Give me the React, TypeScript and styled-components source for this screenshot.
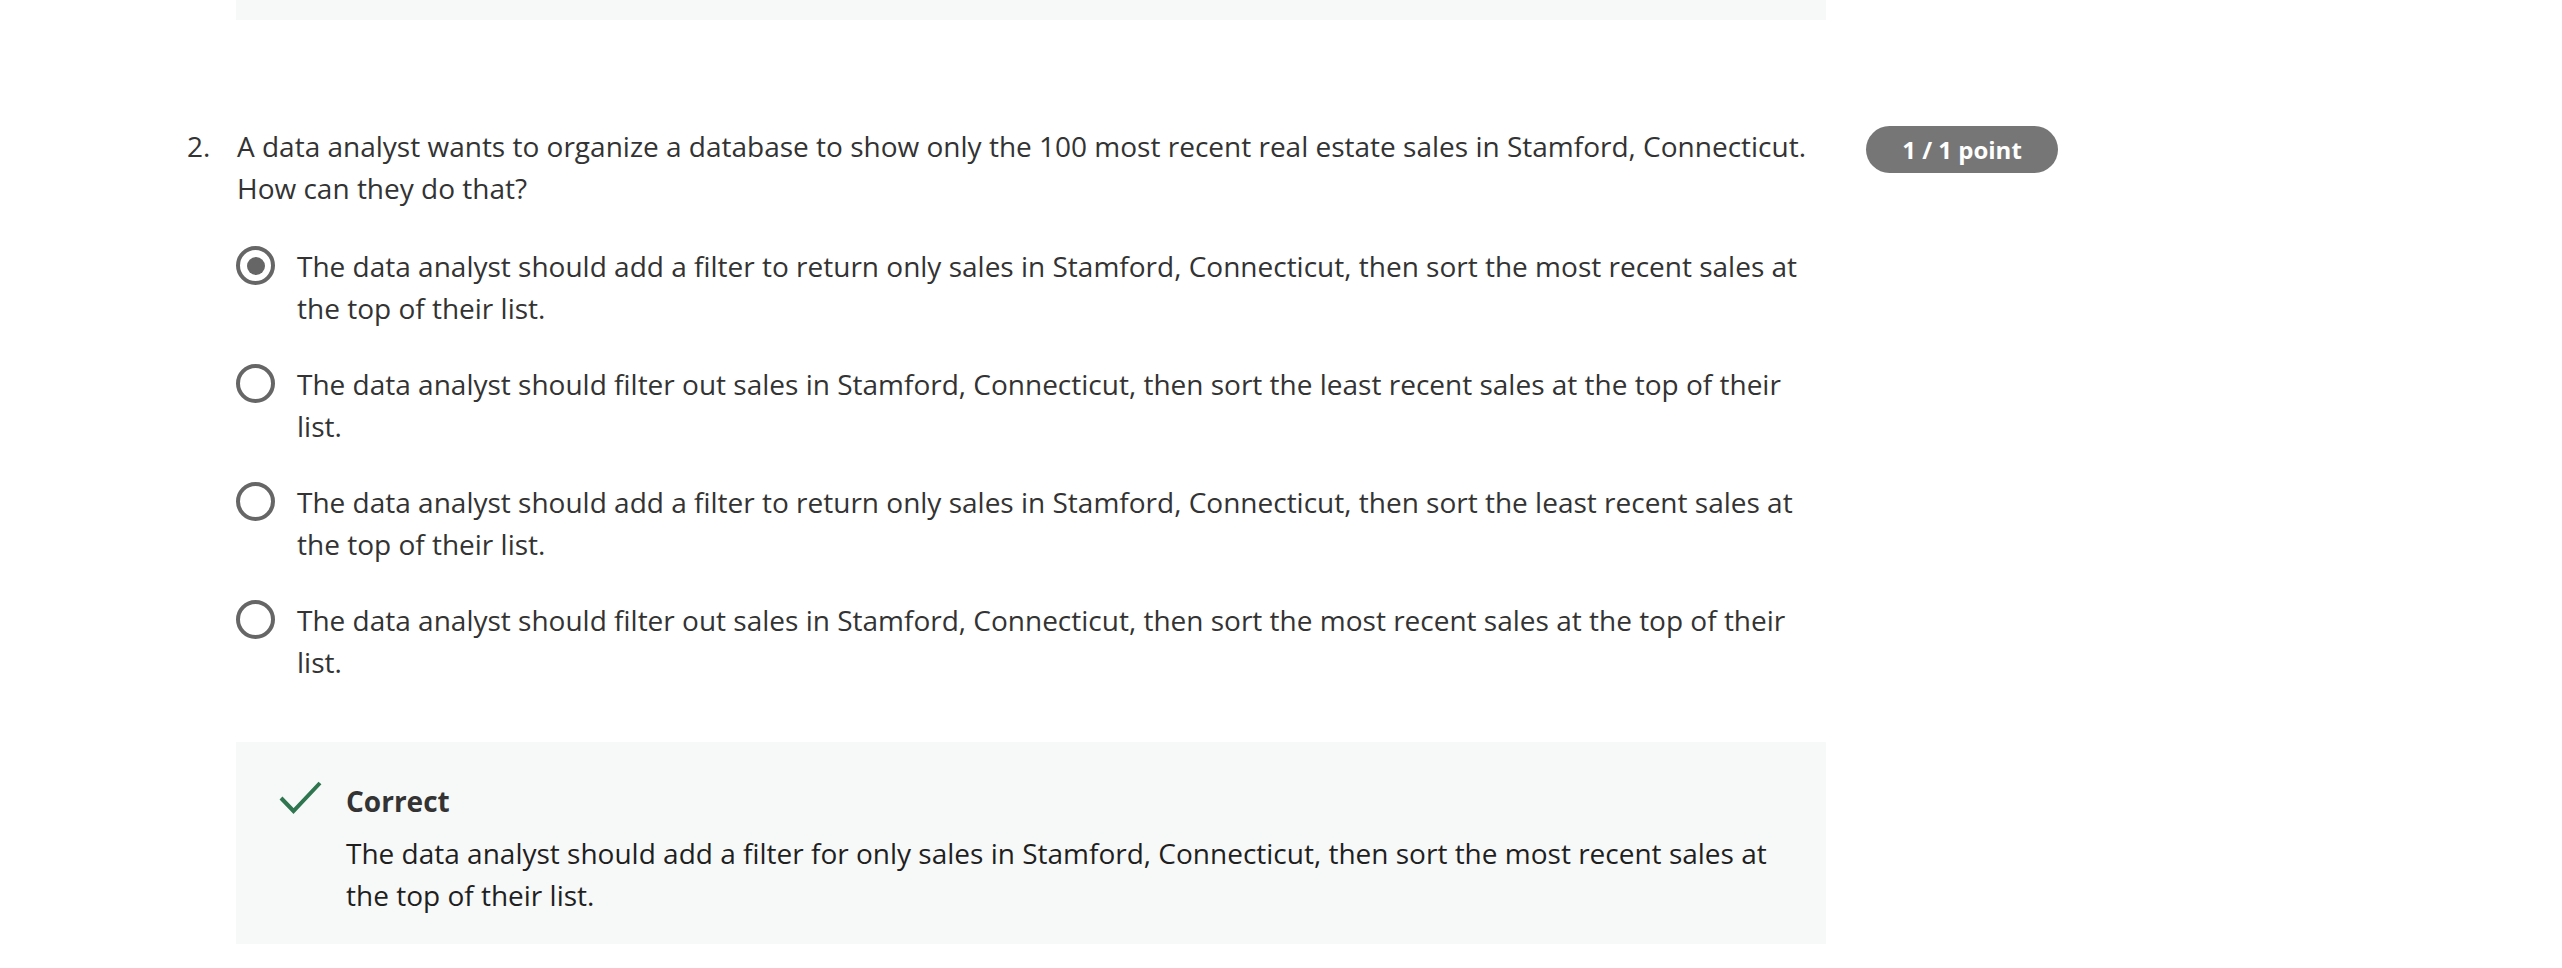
import React from 'react'
import styled, { createGlobalStyle } from 'styled-components'

const GlobalStyle = createGlobalStyle`
    html, body {
        margin: 0;
        padding: 0;
        background: #ffffff;
    }

    body {
        font-family: "Open Sans", "Noto Sans", sans-serif;
        color: #333333;
    }
`

interface OptionItem {
    text: string
    selected?: boolean
}

const options: OptionItem[] = [
    {
        text: 'The data analyst should add a filter to return only sales in Stamford, Connecticut, then sort the most recent sales at the top of their list.',
        selected: true,
    },
    { text: 'The data analyst should filter out sales in Stamford, Connecticut, then sort the least recent sales at the top of their list.' },
    { text: 'The data analyst should add a filter to return only sales in Stamford, Connecticut, then sort the least recent sales at the top of their list.' },
    { text: 'The data analyst should filter out sales in Stamford, Connecticut, then sort the most recent sales at the top of their list.' },
]

const CheckIcon = () => (
    <svg width="43" height="33" viewBox="0 0 43 33" fill="none">
        <polyline points="2,17 14.5,30 41,2" stroke="#2e7550" strokeWidth="4" strokeLinecap="butt" strokeLinejoin="miter" />
    </svg>
)

export default function App() {
    return (
        <Page>
            <GlobalStyle />
            <PrevTail />

            <Question>
                <Number>2.</Number>
                <Body>
                    <Prompt>
                        A data analyst wants to organize a database to show only the 100 most recent real estate sales in Stamford, Connecticut. How can they do that?
                    </Prompt>

                    <Options>
                        {options.map((o) => (
                            <Option key={o.text}>
                                <Radio $selected={!!o.selected} />
                                <OptionText>{o.text}</OptionText>
                            </Option>
                        ))}
                    </Options>

                    <Feedback>
                        <IconCol>
                            <CheckIcon />
                        </IconCol>
                        <div>
                            <FeedbackTitle>Correct</FeedbackTitle>
                            <FeedbackText>
                                The data analyst should add a filter for only sales in Stamford, Connecticut, then sort the most recent sales at the top of their list.
                            </FeedbackText>
                        </div>
                    </Feedback>
                </Body>
                <Badge>1 / 1 point</Badge>
            </Question>
        </Page>
    )
}

const Page = styled.div`
    width: 2562px;
    height: 968px;
    overflow: hidden;
    box-sizing: border-box;
    padding-left: 187px;
`

const PrevTail = styled.div`
    margin-left: 49px;
    width: 1590px;
    height: 20px;
    background-color: #f7f9f8;
`

const Question = styled.div`
    display: flex;
    align-items: flex-start;
    margin-top: 105px;
`

const Number = styled.div`
    width: 49px;
    flex-shrink: 0;
    font-size: 28px;
    line-height: 42px;
    color: #333333;
`

const Body = styled.div`
    width: 1590px;
    flex-shrink: 0;
`

const Prompt = styled.p`
    margin: 0;
    padding-left: 1px;
    font-size: 28px;
    line-height: 42px;
    color: #333333;
`

const Options = styled.div`
    display: flex;
    flex-direction: column;
    gap: 34px;
    margin-top: 36px;
`

const Option = styled.label`
    display: flex;
    align-items: flex-start;
    gap: 22px;
    cursor: pointer;
`

const Radio = styled.span<{ $selected: boolean }>`
    position: relative;
    width: 39px;
    height: 39px;
    margin-top: 1px;
    flex-shrink: 0;
    box-sizing: border-box;
    border: 4px solid #666666;
    border-radius: 50%;

    &::after {
        content: '';
        display: ${({ $selected }) => ($selected ? 'block' : 'none')};
        position: absolute;
        top: 6.5px;
        left: 6.5px;
        width: 18px;
        height: 18px;
        border-radius: 50%;
        background-color: #666666;
    }
`

const OptionText = styled.span`
    width: 1510px;
    font-size: 28px;
    line-height: 42px;
    color: #333333;
`

const Feedback = styled.div`
    display: flex;
    align-items: flex-start;
    margin-top: 59px;
    padding: 38px 42px 28px 43px;
    background-color: #f7f9f8;
`

const IconCol = styled.div`
    width: 67px;
    flex-shrink: 0;
    padding-top: 1px;
`

const FeedbackTitle = styled.div`
    font-size: 28px;
    line-height: 42px;
    font-weight: 700;
    color: #333333;
`

const FeedbackText = styled.p`
    margin: 10px 0 0;
    font-size: 28px;
    line-height: 42px;
    color: #1f1f1f;
`

const Badge = styled.span`
    display: flex;
    align-items: center;
    justify-content: center;
    flex-shrink: 0;
    width: 192px;
    height: 47px;
    margin-left: 40px;
    margin-top: 1px;
    border-radius: 24px;
    background-color: #767676;
    color: #ffffff;
    font-size: 24px;
    font-weight: 700;
`
